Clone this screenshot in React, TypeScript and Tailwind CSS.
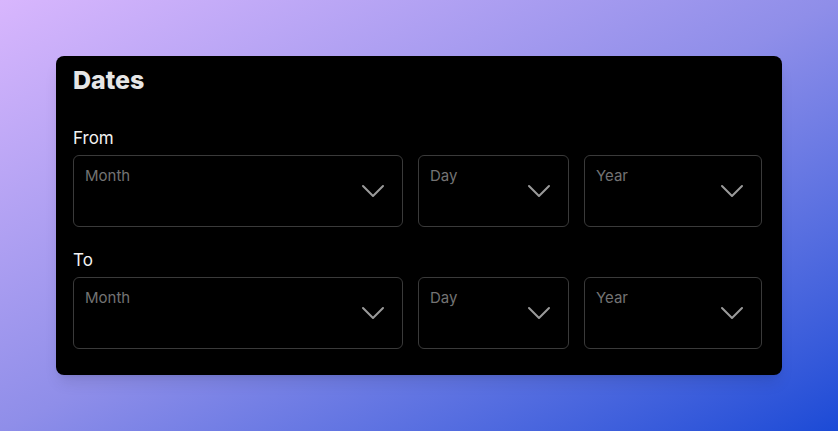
import { ChevronDown } from 'lucide-react';

function SelectBox({ placeholder }: { placeholder: string }) {
  return (
    <div className="relative h-[72px] rounded-md border border-[#3a3a3a] bg-black">
      <span className="absolute left-[11px] top-[10px] text-[15px] leading-5 text-[#737373]">
        {placeholder}
      </span>
      <ChevronDown
        className="absolute right-[9px] top-[15px] h-[40px] w-[40px] text-[#9a9a9a]"
        strokeWidth={1.2}
      />
    </div>
  );
}

function DateRow({ label }: { label: string }) {
  return (
    <div>
      <div className="text-[17px] leading-6 text-[#f2f2f2]">{label}</div>
      <div className="mt-[5px] grid grid-cols-[330px_151px_178px] gap-[15px]">
        <SelectBox placeholder="Month" />
        <SelectBox placeholder="Day" />
        <SelectBox placeholder="Year" />
      </div>
    </div>
  );
}

export default function App() {
  return (
    <div
      className="min-h-screen w-full bg-gradient-to-br from-[#d8b6fd] via-[#8f8ee9] to-[#1b4ad6] p-14"
      style={{ fontFamily: 'Inter, "Noto Sans", sans-serif' }}
    >
      <div className="rounded-lg bg-black pb-[26px] pl-[17px] pr-5 pt-2 shadow-lg">
        <h2 className="text-[25px] font-extrabold leading-8 text-[#e6e6e6]">Dates</h2>
        <div className="mt-[30px] flex flex-col gap-[21px]">
          <DateRow label="From" />
          <DateRow label="To" />
        </div>
      </div>
    </div>
  );
}
